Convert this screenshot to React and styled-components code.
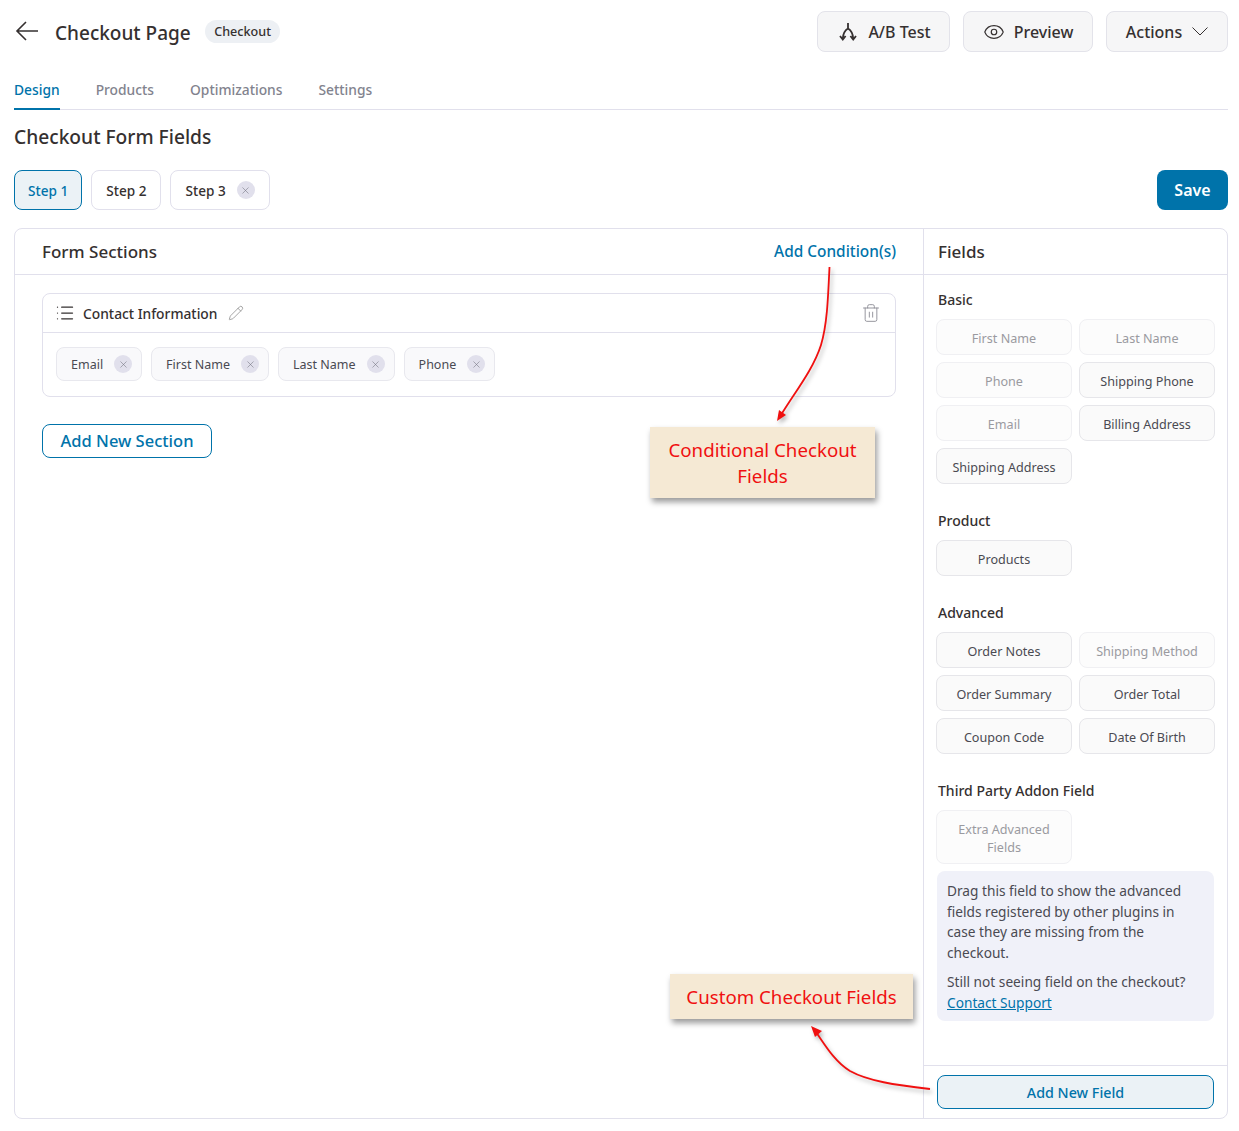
import React from 'react'
import styled, { createGlobalStyle } from 'styled-components'
import { Eye, List, Pencil, Trash2, X } from 'lucide-react'

const GlobalStyle = createGlobalStyle`
  html, body {
    margin: 0;
    padding: 0;
    background: #fff;
  }
  body {
    font-family: 'Noto Sans', 'Open Sans', sans-serif;
    color: #353030;
  }
  * {
    box-sizing: border-box;
  }
`

const PageStyle = styled.div`
  position: relative;
  width: 1239px;
  height: 1131px;
  padding: 11px 11px 0 14px;
  overflow: hidden;
`

const TopBar = styled.div`
  display: flex;
  align-items: center;
  justify-content: space-between;
  height: 41px;
`

const TitleGroup = styled.div`
  display: flex;
  align-items: center;
`

const BackIcon = styled.svg`
  width: 26px;
  height: 22px;
  margin-left: 1px;
  margin-right: 14px;
  margin-top: -1px;
`

const PageTitle = styled.h1`
  margin: 2px 0 0;
  font-size: 19px;
  line-height: 26px;
  font-weight: 500;
  color: #353030;
`

const TypeBadge = styled.span`
  margin-left: 14px;
  margin-top: -1px;
  height: 23px;
  padding: 0 9.5px;
  border-radius: 12px;
  background: #edf0f4;
  font-size: 12.6px;
  line-height: 23px;
  font-weight: 500;
`

const TopActions = styled.div`
  display: flex;
  gap: 13px;
`

const TopButton = styled.button`
  display: flex;
  align-items: center;
  justify-content: center;
  gap: ${p => p.$gap}px;
  width: ${p => p.$width}px;
  height: 41px;
  padding: 0 0 0 ${p => p.$shift || 0}px;
  border: 1px solid #e3e3ea;
  border-radius: 8px;
  background: #f6f6f7;
  color: #353030;
  font-family: inherit;
  font-size: 16px;
  font-weight: 500;
`

const Tabs = styled.div`
  display: flex;
  gap: 36px;
  height: 57px;
  margin-top: 1px;
  border-bottom: 1px solid #e1e0ec;
`

const Tab = styled.div`
  display: flex;
  align-items: flex-end;
  height: 57px;
  padding-bottom: 8px;
  font-size: 13.8px;
  line-height: 20px;
  font-weight: 500;
  color: ${p => (p.$active ? '#0073aa' : '#82838e')};
  border-bottom: 2px solid ${p => (p.$active ? '#0073aa' : 'transparent')};
`

const SectionTitle = styled.h2`
  margin: 14px 0 0;
  font-size: 19.2px;
  line-height: 26px;
  font-weight: 500;
`

const StepsRow = styled.div`
  display: flex;
  align-items: center;
  justify-content: space-between;
  margin-top: 20px;
`

const Steps = styled.div`
  display: flex;
  gap: 9px;
`

const StepButton = styled.div`
  display: flex;
  align-items: center;
  gap: 11px;
  height: 40px;
  padding: 0 ${p => (p.$active ? 13 : 14)}px;
  border: 1px solid ${p => (p.$active ? '#0073aa' : '#e1e0ec')};
  border-radius: 8px;
  background: ${p => (p.$active ? '#ebf2f6' : '#fff')};
  color: ${p => (p.$active ? '#0073aa' : '#353030')};
  font-size: 13.6px;
  font-weight: 500;
`

const RemoveDot = styled.span`
  display: flex;
  align-items: center;
  justify-content: center;
  flex: none;
  width: 18px;
  height: 18px;
  border-radius: 50%;
  background: #e1e0ec;
  color: #6f6f7c;
`

const SaveButton = styled.button`
  width: 71px;
  height: 40px;
  border: 0;
  border-radius: 8px;
  background: #0073aa;
  color: #fff;
  font-family: inherit;
  font-size: 16px;
  font-weight: 600;
`

const Board = styled.div`
  display: grid;
  grid-template-columns: 908px 1fr;
  height: 891px;
  margin-top: 18px;
  border: 1px solid #e1e0ec;
  border-radius: 8px;
`

const LeftColumn = styled.div`
  display: flex;
  flex-direction: column;
`

const RightColumn = styled.div`
  display: flex;
  flex-direction: column;
  border-left: 1px solid #e1e0ec;
`

const PanelHead = styled.div`
  display: flex;
  align-items: center;
  justify-content: space-between;
  height: 46px;
  flex: none;
  padding: 0 27px 0 ${p => p.$left}px;
  border-bottom: 1px solid #e1e0ec;
  font-size: 17px;
  font-weight: 500;
`

const ConditionLink = styled.a`
  color: #0073aa;
  font-size: 15.4px;
  font-weight: 500;
`

const LeftBody = styled.div`
  padding: 18px 27px 0;
`

const SectionBox = styled.div`
  height: 104px;
  border: 1px solid #e1e0ec;
  border-radius: 8px;
`

const SectionHead = styled.div`
  display: flex;
  align-items: center;
  height: 39px;
  padding: 0 14px 0 12px;
  border-bottom: 1px solid #e1e0ec;
  font-size: 13.8px;
  font-weight: 500;
`

const SectionName = styled.span`
  margin-left: 8px;
  margin-right: 11px;
`

const TrashButton = styled.span`
  display: flex;
  margin-left: auto;
  color: #8d8d96;
`

const ChipRow = styled.div`
  display: flex;
  gap: 9px;
  padding: 14px 13px;
`

const Chip = styled.div`
  display: flex;
  align-items: center;
  gap: 11px;
  height: 34px;
  padding: 0 9px 0 14px;
  border: 1px solid #e8e8ee;
  border-radius: 8px;
  background: #f9f9fb;
  font-size: 12.5px;
  line-height: 30px;
  color: #4a4a52;
`

const ChipLabel = styled.span`
  padding-top: 2px;
`

const AddSectionButton = styled.button`
  display: block;
  width: 170px;
  height: 34px;
  margin-top: 27px;
  padding: 0 0 1px;
  border: 1px solid #0073aa;
  border-radius: 8px;
  background: #fff;
  color: #0073aa;
  font-family: inherit;
  font-size: 16.5px;
  font-weight: 500;
`

const FieldsBody = styled.div`
  flex: 1;
  padding: 16px 12px 0 12px;
`

const GroupLabel = styled.div`
  height: 20px;
  padding-left: 2px;
  font-size: 14px;
  line-height: 18px;
  font-weight: 500;
`

const FieldGrid = styled.div`
  display: grid;
  grid-template-columns: 136px 136px;
  gap: 7px;
  margin-top: 8px;
  margin-bottom: ${p => p.$after}px;
`

const FieldItem = styled.div`
  display: flex;
  align-items: center;
  justify-content: center;
  min-height: 36px;
  padding: 10px 8px 6px;
  border: 1px solid ${p => (p.$disabled ? '#f0f0f3' : '#e6e6ea')};
  border-radius: 8px;
  background: ${p => (p.$disabled ? '#fcfcfc' : '#fafafa')};
  color: ${p => (p.$disabled ? '#9a9aa0' : '#4a4a52')};
  font-size: 12.6px;
  line-height: 18px;
  text-align: center;
`

const HelpBox = styled.div`
  width: 277px;
  height: 150px;
  margin-top: 7px;
  margin-left: 1px;
  padding: 10px 10px;
  border-radius: 8px;
  background: #f0f1f9;
  color: #4a4a52;
  font-size: 13.7px;
  line-height: 20.5px;
`

const HelpText = styled.p`
  margin: 0 0 9px;
`

const HelpLink = styled.a`
  color: #0073aa;
  text-decoration: underline;
`

const FieldsFoot = styled.div`
  flex: none;
  height: 53px;
  padding: 9px 13px 0;
  border-top: 1px solid #e1e0ec;
`

const AddFieldButton = styled.button`
  display: block;
  width: 277px;
  height: 34px;
  padding: 0;
  border: 1px solid #0073aa;
  border-radius: 8px;
  background: #ebf2f6;
  color: #0073aa;
  font-family: inherit;
  font-size: 14.3px;
  font-weight: 500;
`

const Callout = styled.div`
  position: absolute;
  left: ${p => p.$left}px;
  top: ${p => p.$top}px;
  width: ${p => p.$width}px;
  height: ${p => p.$height}px;
  display: flex;
  align-items: center;
  justify-content: center;
  text-align: center;
  background: #f5e9d4;
  color: #f01010;
  font-size: 18.7px;
  line-height: 26px;
  box-shadow: 2px 4px 6px rgba(0, 0, 0, 0.4);
`

const ArrowLayer = styled.svg`
  position: absolute;
  left: 0;
  top: 0;
  width: 1239px;
  height: 1131px;
  pointer-events: none;
  filter: drop-shadow(2px 3px 2px rgba(0, 0, 0, 0.28));
`

const basicFields = [
  { label: 'First Name', disabled: true },
  { label: 'Last Name', disabled: true },
  { label: 'Phone', disabled: true },
  { label: 'Shipping Phone' },
  { label: 'Email', disabled: true },
  { label: 'Billing Address' },
  { label: 'Shipping Address' }
]

const advancedFields = [
  { label: 'Order Notes' },
  { label: 'Shipping Method', disabled: true },
  { label: 'Order Summary' },
  { label: 'Order Total' },
  { label: 'Coupon Code' },
  { label: 'Date Of Birth' }
]

const chips = ['Email', 'First Name', 'Last Name', 'Phone']

const ABIcon = () => (
  <svg width="18" height="19" viewBox="0 0 18 19" fill="none" stroke="#353030" strokeWidth="1.8">
    <path d="M9 1v6M9 6.5 C6.5 8 4.2 10.5 3.8 16.5M9 6.5 C11.5 8 13.8 10.5 14.2 16.5" />
    <path d="M1 14l2.8 3.5L6.6 14M11.4 14l2.8 3.5L17 14" />
  </svg>
)

const ChevronIcon = () => (
  <svg width="16" height="9" viewBox="0 0 16 9" fill="none" stroke="#353030" strokeWidth="1">
    <path d="M.5.5l7.5 7.5L15.5.5" />
  </svg>
)

const FieldList = ({ items, after }) => (
  <FieldGrid $after={after}>
    {items.map(({ label, disabled }) => (
      <FieldItem key={label} $disabled={disabled}>
        {label}
      </FieldItem>
    ))}
  </FieldGrid>
)

export default () => (
  <>
    <GlobalStyle />
    <PageStyle>
      <TopBar>
        <TitleGroup>
          <BackIcon viewBox="0 0 26 22" fill="none" stroke="#353030" strokeWidth="1.6">
            <path d="M23 11H2M11 2l-9 9 9 9" />
          </BackIcon>
          <PageTitle>Checkout Page</PageTitle>
          <TypeBadge>Checkout</TypeBadge>
        </TitleGroup>
        <TopActions>
          <TopButton $width={133} $gap={11} $shift={3}>
            <ABIcon />
            A/B Test
          </TopButton>
          <TopButton $width={130} $gap={9}>
            <Eye size={22} strokeWidth={1.3} />
            Preview
          </TopButton>
          <TopButton $width={122} $gap={10}>
            Actions
            <ChevronIcon />
          </TopButton>
        </TopActions>
      </TopBar>

      <Tabs>
        <Tab $active>Design</Tab>
        <Tab>Products</Tab>
        <Tab>Optimizations</Tab>
        <Tab>Settings</Tab>
      </Tabs>

      <SectionTitle>Checkout Form Fields</SectionTitle>

      <StepsRow>
        <Steps>
          <StepButton $active>Step 1</StepButton>
          <StepButton>Step 2</StepButton>
          <StepButton>
            Step 3
            <RemoveDot>
              <X size={11} strokeWidth={1.2} />
            </RemoveDot>
          </StepButton>
        </Steps>
        <SaveButton>Save</SaveButton>
      </StepsRow>

      <Board>
        <LeftColumn>
          <PanelHead $left={27}>
            Form Sections
            <ConditionLink>Add Condition(s)</ConditionLink>
          </PanelHead>
          <LeftBody>
            <SectionBox>
              <SectionHead>
                <List size={20} strokeWidth={1.5} />
                <SectionName>Contact Information</SectionName>
                <Pencil size={16} strokeWidth={1} color="#777" />
                <TrashButton>
                  <Trash2 size={20} strokeWidth={1.1} />
                </TrashButton>
              </SectionHead>
              <ChipRow>
                {chips.map(chip => (
                  <Chip key={chip}>
                    <ChipLabel>{chip}</ChipLabel>
                    <RemoveDot>
                      <X size={11} strokeWidth={1.2} />
                    </RemoveDot>
                  </Chip>
                ))}
              </ChipRow>
            </SectionBox>
            <AddSectionButton>Add New Section</AddSectionButton>
          </LeftBody>
        </LeftColumn>

        <RightColumn>
          <PanelHead $left={14}>Fields</PanelHead>
          <FieldsBody>
            <GroupLabel>Basic</GroupLabel>
            <FieldList items={basicFields} after={28} />
            <GroupLabel>Product</GroupLabel>
            <FieldList items={[{ label: 'Products' }]} after={28} />
            <GroupLabel>Advanced</GroupLabel>
            <FieldList items={advancedFields} after={28} />
            <GroupLabel>Third Party Addon Field</GroupLabel>
            <FieldList items={[{ label: 'Extra Advanced Fields', disabled: true }]} after={0} />
            <HelpBox>
              <HelpText>
                Drag this field to show the advanced fields registered by other plugins in case they
                are missing from the checkout.
              </HelpText>
              Still not seeing field on the checkout?
              <br />
              <HelpLink>Contact Support</HelpLink>
            </HelpBox>
          </FieldsBody>
          <FieldsFoot>
            <AddFieldButton>Add New Field</AddFieldButton>
          </FieldsFoot>
        </RightColumn>
      </Board>

      <Callout $left={650} $top={427} $width={225} $height={71}>
        Conditional Checkout
        <br />
        Fields
      </Callout>
      <Callout $left={670} $top={974} $width={243} $height={45}>
        Custom Checkout Fields
      </Callout>

      <ArrowLayer viewBox="0 0 1239 1131" fill="none">
        <path
          d="M829.5 267 C828 300 827 325 821 345 C813 370 795 392 781 415"
          stroke="#f01010"
          strokeWidth="1.8"
        />
        <path d="M777 421 L779 410 L786 415 Z" fill="#f01010" />
        <path
          d="M930 1089 C895 1085 868 1081 850 1071 C835 1062 825 1045 816 1032"
          stroke="#f01010"
          strokeWidth="1.8"
        />
        <path d="M811 1026 L822 1031 L815 1037 Z" fill="#f01010" />
      </ArrowLayer>
    </PageStyle>
  </>
)
